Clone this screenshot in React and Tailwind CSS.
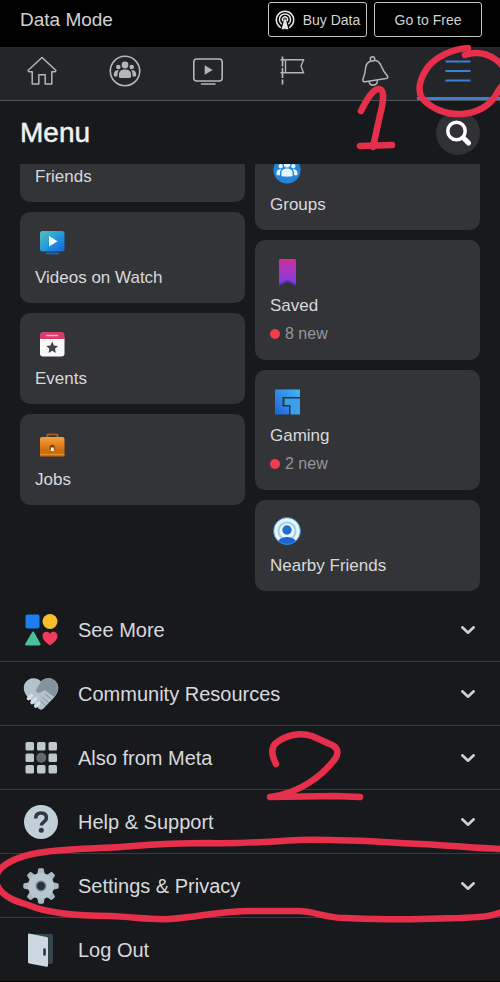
import React from 'react';

function GroupFigures({ color }) {
  return (
    <g fill={color}>
      <circle cx="16" cy="10" r="3.4" />
      <circle cx="9.3" cy="12" r="2.3" />
      <circle cx="22.7" cy="12" r="2.3" />
      <path d="M10 22.5v-3.2c0-3 2.2-4.8 6-4.8s6 1.800 6 4.8v3.2c-1.500.8-10.500.8-12 0z" />
      <path d="M8.500 21.500H5.800c-.7 0-1-.4-1-1 0-3 .9-5.300 3.600-5.300.6 0 1 .1 1.400.3-1 1.300-1.300 2.600-1.300 4z" />
      <path d="M23.500 21.500h2.700c.7 0 1-.4 1-1 0-3-.9-5.300-3.600-5.300-.6 0-1 .1-1.400.3 1 1.300 1.300 2.600 1.300 4z" />
    </g>
  );
}

function HomeIcon() {
  return (
    <svg className="size-8" viewBox="0 0 32 32" fill="none" stroke="#b4b6ba" strokeWidth="1.5" strokeLinejoin="round">
      <path d="M16 2.5L2 15.500l1 1.200h3.200V29h6.600v-9.200h6.400V29h6.600V16.700H29l1-1.200z" />
    </svg>
  );
}

function GroupsIcon() {
  return (
    <svg className="size-8" viewBox="0 0 32 32" fill="none">
      <circle cx="16" cy="16" r="14.7" stroke="#b4b6ba" strokeWidth="1.6" />
      <GroupFigures color="#b4b6ba" />
    </svg>
  );
}

function WatchIcon() {
  return (
    <svg className="size-8" viewBox="0 0 32 32" fill="none" stroke="#b4b6ba" strokeWidth="1.6" strokeLinecap="round">
      <rect x="1.8" y="4" width="28.4" height="22" rx="3" />
      <path d="M12.7 10.3v9.400l8-4.700z" fill="#b4b6ba" stroke="none" />
      <path d="M9.5 29H23" />
    </svg>
  );
}

function FlagIcon() {
  return (
    <svg className="size-8" viewBox="0 0 32 32" fill="none" stroke="#b4b6ba" strokeWidth="1.4">
      <path d="M6.5 1.5v28" strokeDasharray="10 1.5" strokeWidth="1.7" />
      <path d="M4.5 4.8h23L25 11.300l2.500 6.500h-23M9.500 4.800v13" />
    </svg>
  );
}

function BellIcon() {
  return (
    <svg className="size-8" viewBox="0 0 32 32" fill="none" stroke="#b4b6ba" strokeWidth="1.5" strokeLinejoin="round">
      <circle cx="13.5" cy="4" r="2.2" />
      <path d="M11.8 6C8 7.200 6.600 10.500 6.300 15c-.2 4-1.800 6.500-2.500 10 0 1.500 1 2 2.300 1.800l21-3.200c1.700-.4 2.200-1.600 1.200-2.900-2.300-2.500-4-4.800-5.500-8.500C21 8 18.500 5.200 15.400 5.300" />
      <path d="M10 26.500c.5 2.500 2.500 4 5 3.500 2.300-.4 3.500-2.300 3.300-4.800" />
    </svg>
  );
}

function MenuIcon() {
  return (
    <svg className="size-8" viewBox="0 0 32 32" fill="none" stroke="#3f7fd8" strokeWidth="2">
      <path d="M3.5 6.500h25M3.500 16h25M3.500 25.500h25" />
    </svg>
  );
}

function AntennaIcon() {
  return (
    <svg className="size-5" viewBox="0 0 20 20" fill="none" stroke="#e8e8e8" strokeWidth="1.5" strokeLinecap="round">
      <path d="M5.3 17.300A8.700 8.700 0 1 1 14.700 17.300" />
      <path d="M6.3 13.700a5.600 5.600 0 1 1 7.400 0" />
      <path d="M8 10.800a2.500 2.500 0 1 1 4 0" />
      <path d="M10 10L7.500 18.500H9L10 15l1 3.500h1.500z" fill="#e8e8e8" />
    </svg>
  );
}

function VideoTile() {
  return (
    <svg className="size-[30px]" viewBox="0 0 30 30">
      <defs>
        <linearGradient id="video" x1="0" y1="0" x2="1" y2="1">
          <stop offset="0" stopColor="#54c3b9" />
          <stop offset=".5" stopColor="#239bdb" />
          <stop offset="1" stopColor="#1463dc" />
        </linearGradient>
      </defs>
      <rect x="3" y="3" width="24.5" height="20.5" rx="2.5" fill="url(#video)" />
      <path d="M12 8v10.500l8.500-5.200z" fill="#fff" />
      <path d="M9.5 25.500H21" stroke="#1a64b4" strokeWidth="2" strokeLinecap="round" />
    </svg>
  );
}

function EventsTile() {
  return (
    <svg className="size-[30px]" viewBox="0 0 30 30">
      <path d="M3 9h24.500v15.500a3 3 0 0 1-3 3H6a3 3 0 0 1-3-3z" fill="#f7f7f8" />
      <path d="M3 10V6a3 3 0 0 1 3-3h18.500a3 3 0 0 1 3 3v4z" fill="#d63d68" />
      <path d="M9.5 6.500h11" stroke="#f6b1c4" strokeWidth="1.4" strokeLinecap="round" />
      <path d="M15.2 12.500l1.700 3.900 4.200.5-3.100 2.800.8 4.200-3.600-2.100-3.600 2.100.8-4.200-3.100-2.800 4.200-.5z" fill="#414249" />
    </svg>
  );
}

function JobsTile() {
  return (
    <svg className="size-[30px]" viewBox="0 0 30 30">
      <defs>
        <linearGradient id="jobs" x1="0" y1="0" x2="0" y2="1">
          <stop offset="0" stopColor="#f6a13c" />
          <stop offset="1" stopColor="#d9730f" />
        </linearGradient>
      </defs>
      <path d="M10.5 7V4.500h10V7" fill="none" stroke="#a8691f" strokeWidth="1.7" />
      <path d="M3 18h24.500v8.500H3z" fill="#c7700f" />
      <path d="M5 7h20.500a2 2 0 0 1 2 2v8.500A1.500 1.500 0 0 1 26 19H4.500A1.500 1.500 0 0 1 3 17.500V9a2 2 0 0 1 2-2z" fill="url(#jobs)" />
      <path d="M3 24.500h24.500" stroke="#e88f24" />
      <path d="M12.5 19.500v-2a2.700 2.700 0 0 1 5.400 0v2z" fill="#7c4308" />
      <rect x="13.8" y="17.5" width="3" height="3.5" fill="#fff3da" />
    </svg>
  );
}

function GroupsTile() {
  return (
    <svg className="size-[30px]" viewBox="0 0 32 32">
      <circle cx="16" cy="16" r="14.5" fill="#2583d8" />
      <GroupFigures color="#e4f6ff" />
    </svg>
  );
}

function SavedTile() {
  return (
    <svg className="size-[30px]" viewBox="0 0 30 30">
      <defs>
        <linearGradient id="saved" x1=".5" y1="0" x2=".5" y2="1">
          <stop offset="0" stopColor="#cf2f9b" />
          <stop offset="1" stopColor="#7c3cf0" />
        </linearGradient>
      </defs>
      <path d="M8 3h14.500A1.500 1.500 0 0 1 24 4.500v25l-8.500-4-8.500 4v-25A1.500 1.500 0 0 1 8 3z" fill="url(#saved)" />
      <path d="M7 29.500v-2l8.500-4 8.500 4v2l-8.500-4z" fill="#5523b5" opacity=".6" />
    </svg>
  );
}

function GamingTile() {
  return (
    <svg className="size-[30px]" viewBox="0 0 30 30">
      <defs>
        <linearGradient id="gaming" x1="1" y1="0" x2="0" y2="1">
          <stop offset="0" stopColor="#45b7f5" />
          <stop offset="1" stopColor="#1c62dc" />
        </linearGradient>
      </defs>
      <path d="M3 3.500h25V11H10.500v9.500H17V28.500H3z" fill="url(#gaming)" />
      <path d="M12.500 12.500H28v16h-9.500V19h-6z" fill="#3b9fea" />
    </svg>
  );
}

function NearbyTile() {
  return (
    <svg className="size-[30px]" viewBox="0 0 30 30">
      <defs>
        <clipPath id="nearbyClip">
          <circle cx="15" cy="15" r="13.5" />
        </clipPath>
      </defs>
      <g clipPath="url(#nearbyClip)">
        <rect width="30" height="30" fill="#e4f4f7" />
        <circle cx="15" cy="15" r="9.5" fill="#a9cfdd" />
        <circle cx="15" cy="15" r="7.5" fill="#e9f7fb" />
        <circle cx="15" cy="14" r="4.7" fill="#1f72cf" />
        <ellipse cx="15" cy="27" rx="9.5" ry="6" fill="#1b66d2" />
      </g>
      <circle cx="15" cy="15" r="13.5" fill="none" stroke="#2a86c9" />
    </svg>
  );
}

function SeeMoreIcon() {
  return (
    <svg className="size-9" viewBox="0 0 36 36">
      <rect x="2.5" y="2.5" width="14" height="14" rx="2" fill="#1c7df0" />
      <circle cx="27" cy="9.5" r="7.5" fill="#f7bd2c" />
      <path d="M8.9 20.500c.7-1.200 1.700-1.200 2.400 0l6 11c.6 1.200.1 2-1.200 2H3.600c-1.300 0-1.800-.8-1.200-2z" fill="#49bf9b" />
      <path d="M27 33.500c-3-2.200-7.500-5.500-7.500-9.500 0-4.500 5.500-5.700 7.500-2.200 2-3.500 7.500-2.300 7.500 2.200 0 4-4.500 7.300-7.500 9.500z" fill="#ef3d5b" />
    </svg>
  );
}

function HandshakeIcon() {
  return (
    <svg className="size-9" viewBox="0 0 36 36">
      <path d="M18 5.500C13.500.5 4.500 1.500 1.500 8c-2 5.500.5 10 3.500 13.500l10.500 11c1.500 1.500 3.500 1.500 5 0L31 21.500c3.500-4 5.500-8.500 3.500-13.500C31.500 1.500 22.500.5 18 5.500z" fill="#b3c3cc" />
      <path d="M18 5.500C22.500.5 31.500 1.500 34.500 8c2 5-.2 9.500-3.500 13l-9-7-5 2.500c-2.500 1.200-5-.8-3.500-3.500z" fill="#84949f" />
      <path d="M22 18l7.500 6M19.500 21.500l6.500 5.500M17.500 25l5 4.500" stroke="#7d8d98" strokeWidth=".9" fill="none" />
      <path d="M5.500 22.500l3-3M9 26.500l3.500-3.500M12.700 30l3-3" stroke="#d5e0e6" strokeWidth="3.600" strokeLinecap="round" />
    </svg>
  );
}

function GridIcon() {
  const cells = [0, 1, 2, 3, 5, 6, 7, 8];
  return (
    <svg className="size-9" viewBox="0 0 36 36">
      {cells.map((n) => (
        <rect key={n} x={2.5 + (n % 3) * 11.5} y={2 + Math.floor(n / 3) * 11.5} width="8.5" height="8.5" rx="1.5" fill="#bdc8ce" />
      ))}
      <circle cx="18.3" cy="17.8" r="5" fill="#606a71" />
    </svg>
  );
}

function HelpIcon() {
  return (
    <svg className="size-9" viewBox="0 0 36 36">
      <circle cx="18" cy="18" r="17" fill="#c1d0d8" />
      <path d="M12.7 14.500c0-3.800 2.200-5.500 5.400-5.500s5.300 1.700 5.300 5c0 4-5 3.800-5 7.500" fill="none" stroke="#30383f" strokeWidth="3.6" />
      <circle cx="18.3" cy="26.3" r="2.5" fill="#30383f" />
    </svg>
  );
}

function GearIcon() {
  const teeth = [0, 45, 90, 135, 180, 225, 270, 315];
  return (
    <svg className="size-9" viewBox="0 0 36 36">
      {teeth.map((deg) => (
        <path key={deg} d="M14 7l1.200-5.500c.2-.8.6-1.200 1.300-1.200h3c.7 0 1.100.4 1.300 1.200L22 7z" fill="#a9b8c1" transform={`rotate(${deg} 18 18)`} />
      ))}
      <circle cx="18" cy="18" r="13" fill="#b7c6cf" />
      <circle cx="18" cy="18" r="4.7" fill="#27333c" stroke="#71818d" strokeWidth="1.5" />
    </svg>
  );
}

function DoorIcon() {
  return (
    <svg className="size-9" viewBox="0 0 36 36">
      <path d="M6 2h22a2 2 0 0 1 2 2v26a2 2 0 0 1-2 2h-5z" fill="#37454d" />
      <path d="M6 1.500L23.500 5c1 .2 1.500.8 1.500 1.800v26.700c0 1-.6 1.500-1.600 1.300l-16.900-3.300c-1-.2-1.500-.8-1.500-1.800V3c0-1 .3-1.600 1-1.500z" fill="#cbd8df" />
      <path d="M21.5 17.500v5" stroke="#253038" strokeWidth="2.5" strokeLinecap="round" />
    </svg>
  );
}

function Chevron() {
  return (
    <svg className="size-4" viewBox="0 0 16 16" fill="none" stroke="#d0d1d4" strokeWidth="2.6" strokeLinecap="round" strokeLinejoin="round">
      <path d="M2.3 5.300L8 10.700l5.700-5.400" />
    </svg>
  );
}

function Card({ icon, label, badge }) {
  return (
    <button type="button" className="block w-full rounded-[10px] bg-[#333437] px-[15px] pt-4 pb-[13px] text-left">
      <span className="block pl-[2px]">{icon}</span>
      <span className="block mt-2 text-[17px] leading-6 text-[#d8d9dc]">{label}</span>
      {badge && (
        <span className="flex items-center gap-[5px] mt-1 pb-px text-base leading-6 text-[#96979b]">
          <span className="size-[10px] rounded-full bg-[#f03e4d]" />
          {badge}
        </span>
      )}
    </button>
  );
}

const tabs = [
  { name: 'Home', icon: <HomeIcon /> },
  { name: 'Groups', icon: <GroupsIcon /> },
  { name: 'Watch', icon: <WatchIcon /> },
  { name: 'Pages', icon: <FlagIcon /> },
  { name: 'Notifications', icon: <BellIcon /> },
  { name: 'Menu', icon: <MenuIcon />, active: true },
];

const rows = [
  { label: 'See More', icon: <SeeMoreIcon /> },
  { label: 'Community Resources', icon: <HandshakeIcon /> },
  { label: 'Also from Meta', icon: <GridIcon /> },
  { label: 'Help & Support', icon: <HelpIcon /> },
  { label: 'Settings & Privacy', icon: <GearIcon /> },
  { label: 'Log Out', icon: <DoorIcon />, last: true },
];

export default function App() {
  return (
    <div className="relative min-h-screen overflow-hidden bg-[#18191c] font-['Liberation_Sans',Arial,sans-serif]">
      {/* Data mode bar */}
      <div className="flex items-start justify-between bg-black h-[47px] pl-5 pr-[18px] pt-[2px]">
        <span className="text-[19px] leading-9 text-[#d2d2d2]">Data Mode</span>
        <div className="flex gap-[7px]">
          <button type="button" className="flex items-center justify-center gap-2 w-[99px] h-[35px] rounded-[3px] border border-[#c4c4c4] text-sm text-[#d2d2d2] whitespace-nowrap">
            <AntennaIcon />
            Buy Data
          </button>
          <button type="button" className="w-[108px] h-[35px] rounded-[3px] border border-[#c4c4c4] text-sm text-[#d2d2d2]">
            Go to Free
          </button>
        </div>
      </div>

      {/* Tabs */}
      <nav className="grid grid-cols-6 h-[54px] bg-[#242529] border-b border-[#515256]">
        {tabs.map((tab) => (
          <button
            key={tab.name}
            type="button"
            aria-label={tab.name}
            className={
              tab.active
                ? 'flex justify-center pt-2 border-b-[3px] border-[#3f7fd8]'
                : 'flex justify-center pt-2'
            }
          >
            {tab.icon}
          </button>
        ))}
      </nav>

      {/* Title */}
      <header className="flex items-center justify-between h-[63px] px-5">
        <h1 className="text-[28px] leading-9 text-[#f0f1f3] [-webkit-text-stroke:0.5px_#f0f1f3]">Menu</h1>
        <button type="button" aria-label="Search" className="flex items-center justify-center size-11 rounded-full bg-[#303134]">
          <svg className="size-7" viewBox="0 0 28 28" fill="none" stroke="#fff" strokeLinecap="round">
            <circle cx="12.5" cy="12" r="8.7" strokeWidth="3.5" />
            <path d="M19.5 19l5 5" strokeWidth="5" />
          </svg>
        </button>
      </header>

      {/* Shortcuts */}
      <main className="grid grid-cols-2 gap-[10px] items-start px-5 overflow-hidden">
        <div className="flex flex-col gap-[10px] -mt-[53px]">
          <Card icon={<span className="block size-[30px]" />} label="Friends" />
          <Card icon={<VideoTile />} label="Videos on Watch" />
          <Card icon={<EventsTile />} label="Events" />
          <Card icon={<JobsTile />} label="Jobs" />
        </div>
        <div className="flex flex-col gap-[10px] -mt-[25px]">
          <Card icon={<GroupsTile />} label="Groups" />
          <Card icon={<SavedTile />} label="Saved" badge="8 new" />
          <Card icon={<GamingTile />} label="Gaming" badge="2 new" />
          <Card icon={<NearbyTile />} label="Nearby Friends" />
        </div>
      </main>

      {/* Sections */}
      <ul className="mt-[7px]">
        {rows.map((row) => (
          <li key={row.label} className={row.last ? 'border-b-2 border-black' : 'border-b border-[#3a3b3f]'}>
            <button type="button" className="flex items-center w-full h-[63px] pl-[23px] pr-6 text-left">
              {row.icon}
              <span className="flex-1 ml-[19px] text-xl text-[#d8d9dc]">{row.label}</span>
              {!row.last && <Chevron />}
            </button>
          </li>
        ))}
      </ul>

      {/* Hand-drawn step marks */}
      <svg className="absolute top-0 left-0 w-[500px] h-[982px] pointer-events-none" viewBox="0 0 500 982" fill="none" stroke="#e6304b" strokeWidth="6.5" strokeLinecap="round" strokeLinejoin="round">
        <path d="M468 48C452 49 436 57 428 67C420 78 417 90 422 98C430 108 446 115 462 114C478 113 490 105 496 95C499 89 501 86 504 84" />
        <path d="M465 55C478 50 494 54 504 68" />
        <path d="M361 111C366 101 372 90 378 89C385 88 384 100 380 115L373 147" />
        <path d="M360 146L392 145" />
        <path d="M276 764C272 756 270 748 276 743C286 735 300 732 312 736L332 745C338 748 339 753 335 759C322 776 300 793 270 797L335 796L360 797" />
        <path d="M504 849C480 849 450 845 420 844C380 842 340 839 300 840C260 842 240 844 210 843C150 843 130 847 100 848C50 850 30 853 16 859C4 864 -1 869 -3 874" />
        <path d="M-3 885C2 896 14 901 28 905C45 912 75 916 110 916C135 917 150 920 170 919C200 917 220 911 250 911L298 911C315 911 325 918 345 918C370 919 390 920 420 919L460 918C480 917 492 917 504 911" />
      </svg>
    </div>
  );
}
